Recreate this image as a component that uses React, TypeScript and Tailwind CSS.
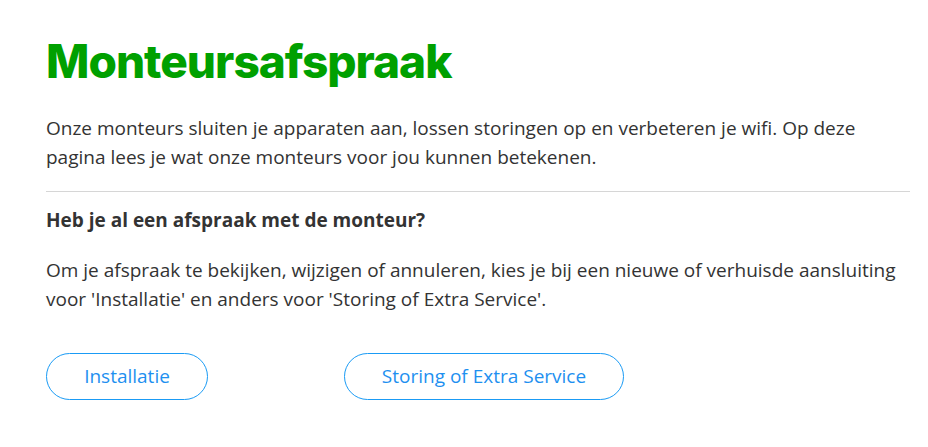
import React from 'react';

const App: React.FC = () => {
  return (
    <div className="min-h-screen bg-white pl-[46px] pr-[18px] pt-[32px] text-[#333333] font-['Open_Sans',sans-serif]">
      {/* Title */}
      <h1 className="text-[46px] leading-[58px] font-extrabold tracking-[-1px] text-[#00a000] font-['Inter',sans-serif]">
        Monteursafspraak
      </h1>

      {/* Intro */}
      <p className="mt-[24px] text-[19px] leading-[29px]">
        Onze monteurs sluiten je apparaten aan, lossen storingen op en verbeteren je wifi. Op deze pagina lees je wat onze monteurs voor jou kunnen betekenen.
      </p>

      <hr className="mt-[19px] border-t border-[#d6d6d6]" />

      <h2 className="mt-[14px] text-[19px] leading-[29px] font-bold">
        Heb je al een afspraak met de monteur?
      </h2>

      <p className="mt-[21px] text-[19px] leading-[29px]">
        Om je afspraak te bekijken, wijzigen of annuleren, kies je bij een nieuwe of verhuisde aansluiting voor 'Installatie' en anders voor 'Storing of Extra Service'.
      </p>

      {/* Buttons */}
      <div className="mt-[39px] flex items-center gap-[136px]">
        <button className="h-[47px] w-[162px] rounded-full border border-[#1a9bf5] text-[19px] text-[#1e90f0]">
          Installatie
        </button>
        <button className="h-[47px] w-[280px] rounded-full border border-[#1a9bf5] text-[19px] text-[#1e90f0]">
          Storing of Extra Service
        </button>
      </div>
    </div>
  );
};

export default App;
